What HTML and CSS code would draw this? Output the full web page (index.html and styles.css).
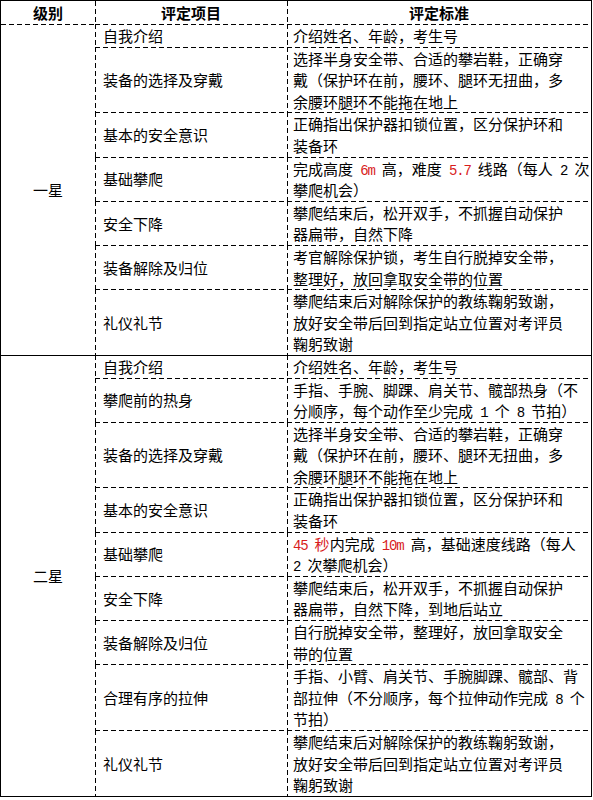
FILE: index.html
```html
<!DOCTYPE html>
<html lang="zh-CN">
<head>
<meta charset="utf-8">
<title>攀岩等级评定标准</title>
<link rel="stylesheet" href="styles.css">
</head>
<body>
<table class="grid">
  <colgroup>
    <col class="c-level">
    <col class="c-item">
    <col class="c-std">
  </colgroup>
  <thead>
    <tr class="head">
      <th class="lvl">级别</th>
      <th class="item">评定项目</th>
      <th class="std">评定标准</th>
    </tr>
  </thead>
  <tbody>
    <tr>
      <td class="lvl" rowspan="7">一星</td>
      <td class="item">自我介绍</td>
      <td class="std">介绍姓名、年龄，考生号</td>
    </tr>
    <tr>
      <td class="item">装备的选择及穿戴</td>
      <td class="std">选择半身安全带、合适的攀岩鞋，正确穿<br>戴（保护环在前，腰环、腿环无扭曲，多<br>余腰环腿环不能拖在地上</td>
    </tr>
    <tr>
      <td class="item">基本的安全意识</td>
      <td class="std">正确指出保护器扣锁位置，区分保护环和<br>装备环</td>
    </tr>
    <tr>
      <td class="item">基础攀爬</td>
      <td class="std">完成高度<span class="num"> <span class="red">6m</span> </span>高，难度<span class="num"> <span class="red">5.7</span> </span>线路（每人<span class="num"> 2 </span>次<br>攀爬机会）</td>
    </tr>
    <tr>
      <td class="item">安全下降</td>
      <td class="std">攀爬结束后，松开双手，不抓握自动保护<br>器扁带，自然下降</td>
    </tr>
    <tr>
      <td class="item">装备解除及归位</td>
      <td class="std">考官解除保护锁，考生自行脱掉安全带，<br>整理好，放回拿取安全带的位置</td>
    </tr>
    <tr>
      <td class="item">礼仪礼节</td>
      <td class="std">攀爬结束后对解除保护的教练鞠躬致谢，<br>放好安全带后回到指定站立位置对考评员<br>鞠躬致谢</td>
    </tr>

    <tr class="sec">
      <td class="lvl" rowspan="9">二星</td>
      <td class="item">自我介绍</td>
      <td class="std">介绍姓名、年龄，考生号</td>
    </tr>
    <tr>
      <td class="item">攀爬前的热身</td>
      <td class="std">手指、手腕、脚踝、肩关节、髋部热身（不<br>分顺序，每个动作至少完成<span class="num"> 1 </span>个<span class="num"> 8 </span>节拍）</td>
    </tr>
    <tr>
      <td class="item">装备的选择及穿戴</td>
      <td class="std">选择半身安全带、合适的攀岩鞋，正确穿<br>戴（保护环在前，腰环、腿环无扭曲，多<br>余腰环腿环不能拖在地上</td>
    </tr>
    <tr>
      <td class="item">基本的安全意识</td>
      <td class="std">正确指出保护器扣锁位置，区分保护环和<br>装备环</td>
    </tr>
    <tr>
      <td class="item">基础攀爬</td>
      <td class="std"><span class="red"><span class="num">45 </span>秒</span>内完成<span class="num"> <span class="red">10m</span> </span>高，基础速度线路（每人<br><span class="num">2 </span>次攀爬机会）</td>
    </tr>
    <tr>
      <td class="item">安全下降</td>
      <td class="std">攀爬结束后，松开双手，不抓握自动保护<br>器扁带，自然下降，到地后站立</td>
    </tr>
    <tr>
      <td class="item">装备解除及归位</td>
      <td class="std">自行脱掉安全带，整理好，放回拿取安全<br>带的位置</td>
    </tr>
    <tr>
      <td class="item">合理有序的拉伸</td>
      <td class="std">手指、小臂、肩关节、手腕脚踝、髋部、背<br>部拉伸（不分顺序，每个拉伸动作完成<span class="num"> 8 </span>个<br>节拍）</td>
    </tr>
    <tr>
      <td class="item">礼仪礼节</td>
      <td class="std">攀爬结束后对解除保护的教练鞠躬致谢，<br>放好安全带后回到指定站立位置对考评员<br>鞠躬致谢</td>
    </tr>
  </tbody>
</table>
</body>
</html>
```

FILE: styles.css
```css
html, body {
  margin: 0;
  padding: 0;
  background: #fff;
}

body {
  font-family: "Noto Sans CJK SC", "Noto Sans", sans-serif;
  font-size: 15px;
  color: #000;
}

.grid {
  table-layout: fixed;
  width: 592px;
  border-collapse: separate;
  border-spacing: 0;
  border: 1px solid #000;
}

.c-level { width: 94px; }
.c-item  { width: 192px; }
.c-std   { width: 304px; }

.grid th,
.grid td {
  padding: 1px 0 0 0;
  line-height: 21.6px;
  vertical-align: middle;
  white-space: nowrap;
  overflow: visible;
  text-align: left;
  font-weight: normal;
  background-repeat: no-repeat;
  background-image:
    repeating-linear-gradient(to right, #000 0 5px, transparent 5px 8px),
    repeating-linear-gradient(to bottom, #000 0 5px, transparent 5px 8px);
  background-size: 100% 1px, 1px 100%;
  background-position: left top, left top;
}

.grid .lvl {
  text-align: center;
  background-image:
    repeating-linear-gradient(to right, #000 0 5px, transparent 5px 8px);
  background-size: 100% 1px;
}

.grid .item { padding-left: 8px; }
.grid .std  { padding-left: 6px; }

.grid .head th {
  padding-top: 0;
  line-height: 23px;
  font-weight: bold;
  text-align: center;
  padding-left: 0;
  background-image:
    repeating-linear-gradient(to bottom, #000 0 5px, transparent 5px 8px);
  background-size: 1px 100%;
}
.grid .head th.lvl {
  background-image: none;
}

.grid .sec td {
  background-image:
    linear-gradient(#000, #000),
    repeating-linear-gradient(to bottom, #000 0 5px, transparent 5px 8px);
  background-size: 100% 1px, 1px 100%;
}
.grid .sec td.lvl {
  background-image: linear-gradient(#000, #000);
  background-size: 100% 1px;
}

/* half-width latin runs, like the fixed-pitch ASCII of the original font */
.num {
  font-family: "Liberation Mono", "DejaVu Sans Mono", monospace;
  font-size: 14px;
  line-height: 0;
  letter-spacing: -1.2px;
  white-space: pre;
}

.red {
  color: #d81c1c;
}
```
